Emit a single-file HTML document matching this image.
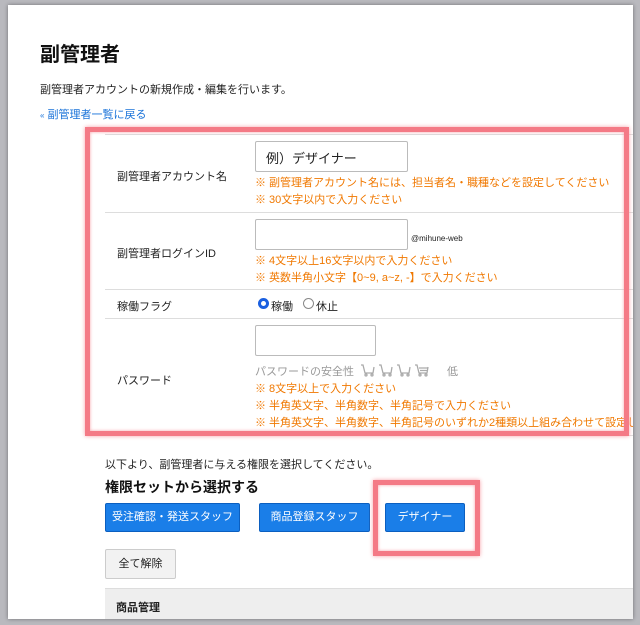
<!DOCTYPE html>
<html><head><meta charset="utf-8"><style>
*{margin:0;padding:0;box-sizing:border-box}
body{width:640px;height:625px;overflow:hidden;background:#b9b9be;font-family:"Liberation Sans","Noto Sans CJK JP",sans-serif;color:#222;position:relative}
.page{position:absolute;left:8px;top:5px;width:625px;height:614px;background:#fff;box-shadow:0 0 4px rgba(0,0,0,.4);overflow:hidden}
.a{position:absolute;white-space:nowrap}
.t{font-size:11px}
.o{color:#f07800;font-size:11px}
.inp{position:absolute;border:1px solid #bbb;border-radius:2px;background:#fff}
.line{position:absolute;left:97px;width:540px;height:1px;background:#ddd}
.red{position:absolute;border:5px solid #f47a86;box-shadow:0 0 4px #f8a0a8,inset 0 0 3px #f8a0a8}
.btn{position:absolute;top:498px;height:29px;background:#1a7ee8;border:1px solid #0b5fc0;border-radius:2px;color:#fff;font-size:11px;text-align:center;line-height:27px}
</style></head><body>
<div class="page">
<div class="a" style="left:32px;top:33px;font-size:20px;font-weight:bold;color:#111">副管理者</div>
<div class="a t" style="left:32px;top:76px">副管理者アカウントの新規作成・編集を行います。</div>
<div class="a t" style="left:32px;top:101px;color:#1a73d9"><span style="font-size:8px">«</span>&nbsp;副管理者一覧に戻る</div>

<div class="line" style="top:129px"></div>
<div class="line" style="top:207px"></div>
<div class="line" style="top:284px"></div>
<div class="line" style="top:313px"></div>
<div class="line" style="top:430px"></div>

<div class="a t" style="left:109px;top:163px">副管理者アカウント名</div>
<div class="inp" style="left:247px;top:136px;width:153px;height:31px"><span class="a" style="left:10px;top:6px;font-size:13px">例）デザイナー</span></div>
<div class="a o" style="left:247px;top:169px">※ 副管理者アカウント名には、担当者名・職種などを設定してください</div>
<div class="a o" style="left:247px;top:186px">※ 30文字以内で入力ください</div>

<div class="a t" style="left:109px;top:240px">副管理者ログインID</div>
<div class="inp" style="left:247px;top:214px;width:153px;height:31px"></div>
<div class="a" style="left:403px;top:229px;font-size:8px">@mihune-web</div>
<div class="a o" style="left:247px;top:247px">※ 4文字以上16文字以内で入力ください</div>
<div class="a o" style="left:247px;top:264px">※ 英数半角小文字【0~9, a~z, -】で入力ください</div>

<div class="a t" style="left:109px;top:293px">稼働フラグ</div>
<div class="a" style="left:250px;top:293px;width:11px;height:11px;border:3px solid #1a5fe0;border-radius:50%"></div>
<div class="a t" style="left:263px;top:293px">稼働</div>
<div class="a" style="left:295px;top:293px;width:11px;height:11px;border:1px solid #888;border-radius:50%"></div>
<div class="a t" style="left:308px;top:293px">休止</div>

<div class="a t" style="left:109px;top:367px">パスワード</div>
<div class="inp" style="left:247px;top:320px;width:121px;height:31px"></div>
<div class="a" style="left:247px;top:358px;font-size:11px;color:#999">パスワードの安全性</div>
<svg class="a" style="left:352px;top:358px" width="90" height="14" viewBox="0 0 90 14" fill="none" stroke="#aaa" stroke-width="1.3">
<path d="M1 2h2l2 8h8l1-6"/><circle cx="6" cy="12" r="1"/><circle cx="12" cy="12" r="1"/>
<path d="M19 2h2l2 8h8l1-6"/><circle cx="24" cy="12" r="1"/><circle cx="30" cy="12" r="1"/>
<path d="M37 2h2l2 8h8l1-6"/><circle cx="42" cy="12" r="1"/><circle cx="48" cy="12" r="1"/>
<path d="M55 2h2l2 8h8l1-6M59 5h9M60 7.5h8"/><circle cx="60" cy="12" r="1"/><circle cx="66" cy="12" r="1"/>
</svg>
<div class="a" style="left:439px;top:358px;font-size:11px;color:#999">低</div>
<div class="a o" style="left:247px;top:375px">※ 8文字以上で入力ください</div>
<div class="a o" style="left:247px;top:392px">※ 半角英文字、半角数字、半角記号で入力ください</div>
<div class="a o" style="left:247px;top:409px">※ 半角英文字、半角数字、半角記号のいずれか2種類以上組み合わせて設定してください</div>

<div class="red" style="left:77px;top:122px;width:544px;height:309px"></div>

<div class="a t" style="left:97px;top:451px">以下より、副管理者に与える権限を選択してください。</div>
<div class="a" style="left:97px;top:472px;font-size:14px;font-weight:bold;color:#111">権限セットから選択する</div>
<div class="btn" style="left:97px;width:135px">受注確認・発送スタッフ</div>
<div class="btn" style="left:251px;width:111px">商品登録スタッフ</div>
<div class="btn" style="left:377px;width:80px">デザイナー</div>
<div class="red" style="left:365px;top:475px;width:107px;height:76px"></div>
<div class="a" style="left:97px;top:544px;width:71px;height:30px;background:#f2f2f2;border:1px solid #ccc;border-radius:2px;font-size:11px;text-align:center;line-height:28px">全て解除</div>
<div class="a" style="left:97px;top:583px;width:540px;height:40px;background:#eee;border-top:1px solid #ddd"><span class="a" style="left:11px;top:10px;font-size:11px;font-weight:bold">商品管理</span></div>
</div>
</body></html>
